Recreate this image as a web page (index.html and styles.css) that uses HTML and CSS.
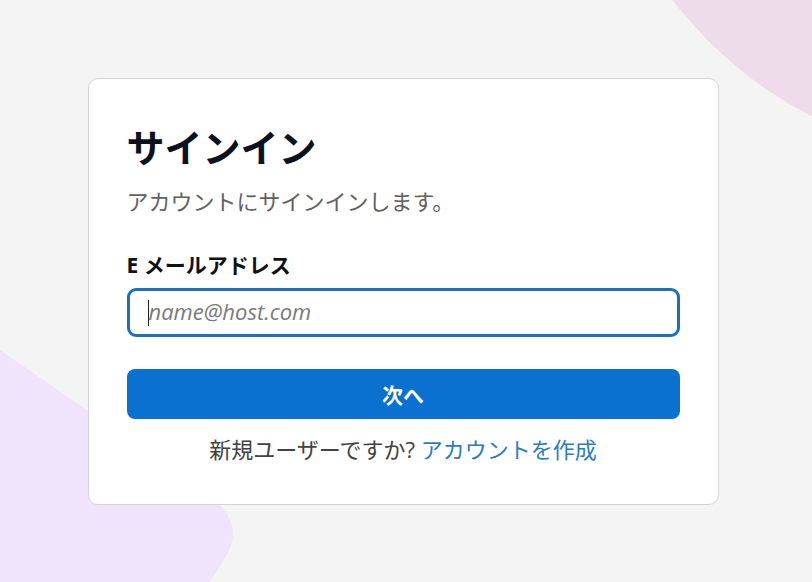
FILE: index.html
```html
<!DOCTYPE html>
<html lang="ja">
<head>
<meta charset="utf-8">
<title>サインイン</title>
<link rel="stylesheet" href="styles.css">
</head>
<body>
<svg class="bg" width="812" height="582" viewBox="0 0 812 582" aria-hidden="true">
  <circle cx="1000" cy="-250" r="412" fill="#efdcea"/>
  <path d="M0,350 L200,488 Q248,520 226,556 L210,582 L0,582 Z" fill="#f0e4fc"/>
</svg>
<main class="page">
  <section class="card">
    <h1 class="title">サインイン</h1>
    <p class="subtitle">アカウントにサインインします。</p>
    <label class="label" for="email">E メールアドレス</label>
    <div class="field">
      <span class="caret"></span>
      <input id="email" class="input" type="email" placeholder="name@host.com">
    </div>
    <button class="btn" type="button">次へ</button>
    <p class="footer">新規ユーザーですか? <a class="link" href="#">アカウントを作成</a></p>
  </section>
</main>
</body>
</html>
```
FILE: styles.css
```css
html, body {
  margin: 0;
  padding: 0;
  height: 100%;
}
body {
  background: #f4f4f4;
  font-family: "Open Sans", "Noto Sans CJK JP", sans-serif;
  overflow: hidden;
}
.bg {
  position: absolute;
  left: 0;
  top: 0;
  z-index: 0;
}
.page {
  position: relative;
  z-index: 1;
  box-sizing: border-box;
  height: 100%;
  display: flex;
  align-items: center;
  justify-content: center;
  padding-right: 6px;
}
.card {
  box-sizing: border-box;
  width: 631px;
  background: #fff;
  border: 1px solid #d4d4d4;
  border-radius: 10px;
  padding: 47px 38px 41px;
  display: flex;
  flex-direction: column;
}
.title {
  margin: 0;
  font-family: "Noto Sans CJK JP", sans-serif;
  font-size: 38px;
  line-height: 40px;
  font-weight: 700;
  color: #0c111c;
}
.subtitle {
  margin: 20px 0 0;
  font-family: "Noto Sans CJK JP", sans-serif;
  font-size: 22px;
  line-height: 28px;
  color: #616161;
}
.label {
  margin-top: 39px;
  font-size: 21px;
  line-height: 24px;
  font-weight: 700;
  color: #111;
}
.field {
  position: relative;
  margin-top: 11px;
}
.input {
  box-sizing: border-box;
  width: 100%;
  height: 49px;
  border: 3px solid #1c70c0;
  border-radius: 9px;
  padding: 0 18px 2px 19px;
  font-family: "Open Sans", sans-serif;
  font-size: 22px;
  color: #222;
  outline: none;
  background: #fff;
}
.input::placeholder {
  color: #7a7a7a;
  font-style: italic;
}
.caret {
  position: absolute;
  left: 21px;
  top: 12px;
  width: 1px;
  height: 26px;
  background: #222;
}
.btn {
  margin-top: 32px;
  height: 50px;
  border: none;
  border-radius: 8px;
  background: #0b71d0;
  color: #fff;
  font-family: "Noto Sans CJK JP", sans-serif;
  font-size: 21px;
  font-weight: 700;
  cursor: pointer;
}
.footer {
  margin: 16px 0 0;
  text-align: center;
  font-size: 22px;
  line-height: 28px;
  color: #424242;
}
.link {
  color: #2a7bc4;
  text-decoration: none;
}
```
